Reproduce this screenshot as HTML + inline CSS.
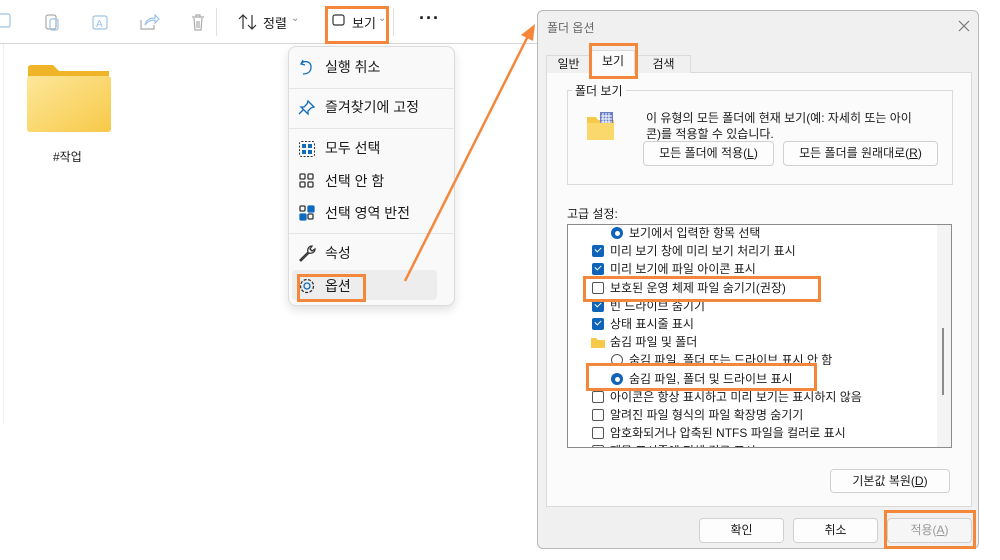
<!DOCTYPE html>
<html><head><meta charset="utf-8"><style>
*{margin:0;padding:0;box-sizing:border-box}
body{width:1000px;height:560px;background:#fff;position:relative;overflow:hidden;font-family:"Liberation Sans","Noto Sans CJK KR",sans-serif;color:#1a1a1a}
.a{position:absolute}
.t{position:absolute;white-space:nowrap}
.ob{position:absolute;border:3px solid #f5873a}
.mi{position:absolute;left:325px;font-size:14px;color:#1a1a1a}
.sep{position:absolute;left:289px;width:166px;height:1px;background:#e5e5e5}
.dlg{font-size:12px}
.btn{position:absolute;background:#fdfdfd;border:1px solid #d0d0d0;border-radius:4px;text-align:center;font-size:12px;line-height:22px}
.row{position:absolute;font-size:12px;left:0;height:18px;line-height:18px;white-space:nowrap}
.cb{position:absolute;width:12px;height:12px;border-radius:2px;top:3px}
.cb.on{background:#0f63b8}
.cb.on:after{content:"";position:absolute;left:3px;top:2px;width:5px;height:3px;border-left:1.5px solid #fff;border-bottom:1.5px solid #fff;transform:rotate(-45deg)}
.cb.off{border:1px solid #555;background:#fff}
.rd{position:absolute;width:12px;height:12px;border-radius:50%;top:3px}
.rd.on{background:#0f63b8}
.rd.on:after{content:"";position:absolute;left:3.5px;top:3.5px;width:5px;height:5px;border-radius:50%;background:#fff}
.rd.off{border:1px solid #555;background:#fff}
</style></head><body>
<div class="a" style="left:0;top:43px;width:538px;height:1px;background:#d8d8d8"></div>
<div class="a" style="left:3px;top:44px;width:1px;height:380px;background:#eee"></div>
<svg class="a" style="left:0;top:10px" width="220" height="24" viewBox="0 10 220 24" fill="none" stroke="#9cc3e6" stroke-width="1.2">
<rect x="-2" y="14" width="12" height="13" rx="2"/>
<rect x="46" y="15" width="10" height="14" rx="2" stroke="#aaa"/><rect x="50" y="19" width="8" height="11" rx="2"/>
<rect x="93" y="16" width="14" height="13" rx="2"/><text x="96" y="27" font-size="10" fill="#9cc3e6" stroke="none" font-family="Liberation Sans">A</text>
<path d="M141 20v9h13v-4" stroke="#aaa"/><path d="M145 25c1-5 5-7 10-7v-3l4 4-4 4v-3c-4 0-7 1-10 5z"/>
<path d="M192 17h12M196 17v-2h4v2M194 18l1 12h6l1-12M197 21v7M199 21v7" stroke="#aaa"/>
</svg>
<div class="a" style="left:216px;top:8px;width:1px;height:28px;background:#e0e0e0"></div>
<svg class="a" style="left:238px;top:13px" width="20" height="18" fill="none" stroke="#333" stroke-width="1.2"><path d="M5 16V2M1 6l4-4 4 4M14 2v14M10 12l4 4 4-4"/></svg>
<div class="t" style="left:263px;top:13px;font-size:13px">정렬</div>
<div class="t" style="left:291px;top:13px;font-size:10px;color:#888">⌄</div>
<svg class="a" style="left:332px;top:14px" width="14" height="14" fill="none" stroke="#333" stroke-width="1.2"><rect x="1" y="1" width="11" height="10" rx="2"/></svg>
<div class="t" style="left:352px;top:13px;font-size:13px">보기</div>
<div class="t" style="left:378px;top:13px;font-size:10px;color:#888">⌄</div>
<div class="ob" style="left:325px;top:6px;width:64px;height:38px"></div>
<div class="a" style="left:393px;top:8px;width:1px;height:28px;background:#e0e0e0"></div>
<div class="t" style="left:419px;top:8px;font-size:18px;font-weight:bold;letter-spacing:1px">···</div>
<svg class="a" style="left:26px;top:64px" width="86" height="70"><defs><linearGradient id="g" x1="0" y1="0" x2="1" y2="1"><stop offset="0" stop-color="#fde79a"/><stop offset="1" stop-color="#f7c948"/></linearGradient></defs><path d="M2 4q0-3 3-3h22l6 6h50v6H2z" fill="#f0b429"/><rect x="1" y="12" width="84" height="56" rx="3" fill="url(#g)"/></svg>
<div class="t" style="left:53px;top:148px;font-size:12px">#작업</div>
<div class="a" style="left:288px;top:46px;width:167px;height:260px;background:#f9f9f9;border:1px solid #dcdcdc;border-radius:8px;box-shadow:0 4px 10px rgba(0,0,0,.12)"></div>
<div class="a" style="left:292px;top:270px;width:145px;height:30px;background:#ededed;border-radius:4px"></div>
<svg class="a" style="left:298px;top:56px" width="20" height="240" fill="none" stroke="#0f6cbd" stroke-width="1.3">
<path d="M5 4l-2 4 4 1M3 8c3-4 10-3 10 3s-5 7-8 7"/>
<path d="M10 45l6 6-3 1-3 3 0 3-7-7 3 0 3-3zM5 54l-4 4"/>
<rect x="1.5" y="85.5" width="15" height="15" rx="2" stroke="#333" stroke-width="1" stroke-dasharray="2 1.5"/>
<rect x="4" y="88" width="4" height="4" fill="#0f6cbd" stroke="none"/><rect x="10" y="88" width="4" height="4" fill="#0f6cbd" stroke="none"/><rect x="4" y="94" width="4" height="4" fill="#0f6cbd" stroke="none"/><rect x="10" y="94" width="4" height="4" fill="#0f6cbd" stroke="none"/>
<g stroke="#333"><rect x="2" y="118" width="5" height="5" rx="1"/><rect x="10" y="118" width="5" height="5" rx="1"/><rect x="2" y="126" width="5" height="5" rx="1"/><rect x="10" y="126" width="5" height="5" rx="1"/></g>
<rect x="2" y="150" width="5" height="5" rx="1" stroke="#333"/><rect x="10" y="150" width="6" height="6" rx="1" fill="#0f6cbd"/><rect x="2" y="158" width="6" height="6" rx="1" fill="#0f6cbd"/><rect x="10" y="158" width="5" height="5" rx="1" stroke="#333"/>
<path stroke="#333" d="M2 204l8-8c-1-3 1-6 4-6l-2 3 2 2 3-2c0 3-3 5-6 4l-8 8z"/>
<circle cx="9" cy="230" r="3" stroke="#0f6cbd"/><circle cx="9" cy="230" r="6.5" stroke="#333" stroke-dasharray="3 1.5"/>
</svg>
<div class="mi" style="top:57px">실행 취소</div>
<div class="sep" style="top:88px"></div>
<div class="mi" style="top:97px">즐겨찾기에 고정</div>
<div class="sep" style="top:128px"></div>
<div class="mi" style="top:138px">모두 선택</div>
<div class="mi" style="top:171px">선택 안 함</div>
<div class="mi" style="top:203px">선택 영역 반전</div>
<div class="sep" style="top:233px"></div>
<div class="mi" style="top:243px">속성</div>
<div class="mi" style="top:276px">옵션</div>
<div class="ob" style="left:297px;top:274px;width:69px;height:28px"></div>
<svg class="a" style="left:0;top:0" width="1000" height="560"><line x1="405" y1="281" x2="528" y2="36" stroke="#f5873a" stroke-width="2.5"/><path d="M535 24l-2 17-12-6z" fill="#f5873a"/></svg>
<div class="a dlg" style="left:537px;top:10px;width:442px;height:539px;background:#f0f0f0;border:1px solid #b8b8b8;border-radius:6px">
<div class="t" style="left:9px;top:8px;color:#666">폴더 옵션</div>
<svg class="a" style="left:420px;top:9px" width="12" height="12" stroke="#777" stroke-width="1.2"><path d="M1 1l10 10M11 1L1 11"/></svg>
<div class="a" style="left:8px;top:61px;width:426px;height:435px;background:#fbfbfb;border:1px solid #dadada"></div>
<div class="t" style="left:8px;top:44px;width:45px;height:18px;border:1px solid #dadada;border-bottom:none;background:#f0f0f0;text-align:center;line-height:16px">일반</div>
<div class="t" style="left:53px;top:39px;width:44px;height:24px;border:1px solid #dadada;border-bottom:none;background:#fbfbfb;text-align:center;line-height:20px">보기</div>
<div class="t" style="left:98px;top:44px;width:55px;height:18px;border:1px solid #dadada;border-bottom:none;background:#f0f0f0;text-align:center;line-height:16px">검색</div>
<div class="ob" style="left:51px;top:32px;width:49px;height:36px"></div>
<div class="a" style="left:29px;top:79px;width:386px;height:95px;border:1px solid #dadada"></div>
<div class="t" style="left:34px;top:71px;background:#fbfbfb;padding:0 3px">폴더 보기</div>
<svg class="a" style="left:48px;top:100px" width="30" height="30"><path d="M1 6h9l2 3h16v19H1z" fill="#f7c948"/><rect x="14" y="1" width="13" height="13" fill="#6a7fc6"/><path d="M17 2v11M20 2v11M23 2v11M15 5h11M15 8h11M15 11h11" stroke="#fff" stroke-width="1"/><rect x="1" y="12" width="27" height="17" fill="#fbd86c"/></svg>
<div class="t" style="left:108px;top:99px;line-height:16px">이 유형의 모든 폴더에 현재 보기(예: 자세히 또는 아이<br>콘)를 적용할 수 있습니다.</div>
<div class="btn" style="left:105px;top:130px;width:131px;height:25px">모든 폴더에 적용(<u>L</u>)</div>
<div class="btn" style="left:245px;top:130px;width:155px;height:25px">모든 폴더를 원래대로(<u>R</u>)</div>
<div class="t" style="left:29px;top:194px">고급 설정:</div>
<div class="a" style="left:29px;top:213px;width:385px;height:224px;background:#fff;border:1px solid #8a8a8a;overflow:hidden">
 <div class="a" style="left:369px;top:0;width:15px;height:222px;background:#f4f4f4"></div>
 <div class="a" style="left:374px;top:103px;width:2px;height:67px;background:#8a8a8a"></div>
 <div class="row" style="top:-1px"><span class="rd on" style="left:43px"></span><span class="t" style="left:61px">보기에서 입력한 항목 선택</span></div>
 <div class="row" style="top:17px"><span class="cb on" style="left:24px"></span><span class="t" style="left:42px">미리 보기 창에 미리 보기 처리기 표시</span></div>
 <div class="row" style="top:35px"><span class="cb on" style="left:24px"></span><span class="t" style="left:42px">미리 보기에 파일 아이콘 표시</span></div>
 <div class="row" style="top:54px"><span class="cb off" style="left:24px"></span><span class="t" style="left:42px">보호된 운영 체제 파일 숨기기(권장)</span></div>
 <div class="row" style="top:72px"><span class="cb on" style="left:24px"></span><span class="t" style="left:42px">빈 드라이브 숨기기</span></div>
 <div class="row" style="top:90px"><span class="cb on" style="left:24px"></span><span class="t" style="left:42px">상태 표시줄 표시</span></div>
 <div class="row" style="top:108px"><svg class="a" style="left:23px;top:4px" width="14" height="11"><path d="M0 1h5l2 2h7v8H0z" fill="#f7c948"/></svg><span class="t" style="left:42px">숨김 파일 및 폴더</span></div>
 <div class="row" style="top:126px"><span class="rd off" style="left:43px"></span><span class="t" style="left:61px">숨김 파일, 폴더 또는 드라이브 표시 안 함</span></div>
 <div class="row" style="top:145px"><span class="rd on" style="left:43px"></span><span class="t" style="left:61px">숨김 파일, 폴더 및 드라이브 표시</span></div>
 <div class="row" style="top:163px"><span class="cb off" style="left:24px"></span><span class="t" style="left:42px">아이콘은 항상 표시하고 미리 보기는 표시하지 않음</span></div>
 <div class="row" style="top:181px"><span class="cb off" style="left:24px"></span><span class="t" style="left:42px">알려진 파일 형식의 파일 확장명 숨기기</span></div>
 <div class="row" style="top:199px"><span class="cb off" style="left:24px"></span><span class="t" style="left:42px">암호화되거나 압축된 NTFS 파일을 컬러로 표시</span></div>
 <div class="row" style="top:217px"><span class="cb off" style="left:24px"></span><span class="t" style="left:42px">제목 표시줄에 전체 경로 표시</span></div>
</div>
<div class="btn" style="left:292px;top:458px;width:120px;height:24px">기본값 복원(<u>D</u>)</div>
<div class="btn" style="left:161px;top:507px;width:85px;height:25px">확인</div>
<div class="btn" style="left:255px;top:507px;width:85px;height:25px">취소</div>
<div class="btn" style="left:349px;top:507px;width:85px;height:25px;color:#999;background:#f6f6f6">적용(<u>A</u>)</div>
</div>
<div class="ob" style="left:583px;top:276px;width:238px;height:26px"></div>
<div class="ob" style="left:586px;top:363px;width:231px;height:28px"></div>
<div class="ob" style="left:884px;top:510px;width:92px;height:39px"></div>
</body></html>
